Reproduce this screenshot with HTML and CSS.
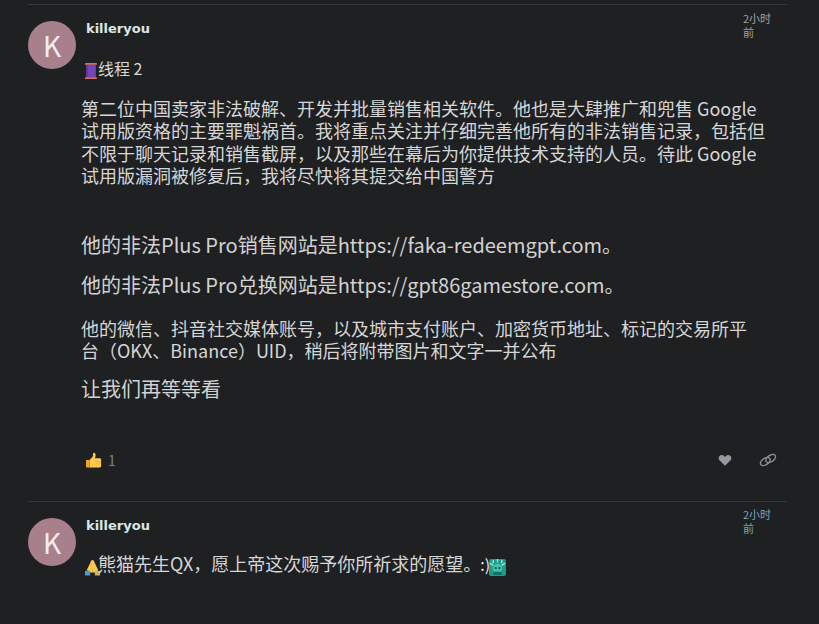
FILE: index.html
```html
<!DOCTYPE html>
<html lang="zh-CN">
<head>
  <meta charset="UTF-8" />
  <meta name="viewport" content="width=device-width, initial-scale=1.0" />
  <title>线程 2</title>
  <link rel="stylesheet" href="styles.css">
</head>
<body>
  <div class="topic">
    <article class="post first">
      <div class="avatar">K</div>
      <div class="post-main">
        <header class="post-head">
          <span class="username">killeryou</span>
          <span class="post-date">2小时前</span>
        </header>
        <div class="cooked">
          <p class="thread-line"><svg class="emoji spool" viewBox="0 0 12 16"><rect x="1.200" y="1.500" width="9.600" height="13" fill="#7445b5"/><rect x="1.200" y="1.500" width="1.500" height="13" fill="#5f359c"/><rect x="0" y="0" width="12" height="1.800" rx="0.500" fill="#d0705f"/><rect x="0" y="14.200" width="12" height="1.800" rx="0.500" fill="#d0705f"/></svg>线程 2</p>
          <p class="para">第二位中国卖家非法破解、开发并批量销售相关软件。他也是大肆推广和兜售 Google 试用版资格的主要罪魁祸首。我将重点关注并仔细完善他所有的非法销售记录，包括但不限于聊天记录和销售截屏，以及那些在幕后为你提供技术支持的人员。待此 Google 试用版漏洞被修复后，我将尽快将其提交给中国警方</p>
          <p class="big first-big">他的非法Plus Pro销售网站是https://faka-redeemgpt.com。</p>
          <p class="big second-big">他的非法Plus Pro兑换网站是https://gpt86gamestore.com。</p>
          <p class="para social">他的微信、抖音社交媒体账号，以及城市支付账户、加密货币地址、标记的交易所平台（OKX、Binance）UID，稍后将附带图片和文字一并公布</p>
          <p class="big wait">让我们再等等看</p>
        </div>
        <footer class="post-actions">
          <div class="reactions">
            <svg class="thumb" viewBox="0 0 16 16"><path d="M1 7.500h3.200v7H1.800c-.5 0-.8-.3-.8-.8z" fill="#f0a830"/><path d="M4.200 7.500 7 4.600c.5-.6.6-1.400.6-2.600 0-.7.4-1.200 1-1.200.9 0 1.400.9 1.400 2.200 0 1-.3 2-.7 2.800h4.600c.8 0 1.300.6 1.300 1.300v5.800c0 1-.7 1.800-1.800 1.800H4.200z" fill="#fdc94f"/><path d="M10 9h5M10 11.200h5" stroke="#eda82f" stroke-width=".7"/></svg>
            <span class="count">1</span>
          </div>
          <div class="controls">
            <svg class="heart" viewBox="0 0 16 16"><path d="M8 14.500 1.900 8.600C.3 7 .4 4.500 2 3.100c1.500-1.300 3.900-1 5.200.5L8 4.500l.8-.9c1.300-1.500 3.700-1.800 5.200-.5 1.600 1.400 1.700 3.900.1 5.500z" fill="#97979f"/></svg>
            <svg class="link" viewBox="0 0 18 18" fill="none" stroke="#8c8c94" stroke-width="1.500"><ellipse cx="6.300" cy="10.500" rx="5.400" ry="3.200" transform="rotate(-35 6.300 10.500)"/><ellipse cx="11.700" cy="7.500" rx="5.400" ry="3.200" transform="rotate(-35 11.700 7.500)"/></svg>
          </div>
        </footer>
      </div>
    </article>
    <article class="post second">
      <div class="avatar">K</div>
      <div class="post-main">
        <header class="post-head">
          <span class="username">killeryou</span>
          <span class="post-date new">2小时前</span>
        </header>
        <div class="cooked">
          <p class="greet"><svg class="emoji pray" viewBox="0 0 16 17"><path d="M8 0.500c-1.200 0-1.900 1.200-2.300 2.800L2 11l2 2.500 3.800.5.200-3 .2 3 3.800-.5 2-2.500-3.700-7.700C9.900 1.700 9.200.5 8 .5z" fill="#f7c948"/><rect x="0" y="12" width="5.500" height="5" fill="#4f97d8"/><rect x="10.500" y="12" width="5.500" height="5" fill="#c9b26a"/></svg>熊猫先生QX，愿上帝这次赐予你所祈求的愿望。<span class="smile">:)</span><svg class="emoji badge" viewBox="0 0 16 16"><rect width="16" height="16" rx="2" fill="#1f9a8f"/><path d="M4 1v3M8 0v3M12 1v3M1 4l3 2M15 4l-3 2" stroke="#a9ece0" stroke-width="1.200"/><circle cx="8" cy="9" r="4.500" fill="#3fc2a8"/><rect x="4" y="12" width="8" height="3" fill="#0f6f6a"/><circle cx="6.300" cy="8.500" r="1" fill="#0f4f4a"/><circle cx="9.700" cy="8.500" r="1" fill="#0f4f4a"/></svg></p>
        </div>
      </div>
    </article>
  </div>
</body>
</html>
```

FILE: styles.css
```css
* { box-sizing: border-box; }
body { margin: 0; height: 624px; overflow: hidden; background: #1f2022; color: #d6d6d6; font-family: "Noto Sans CJK SC", "Noto Sans", sans-serif; }
p { margin: 0; }
.topic { margin-left: 28px; width: 759px; padding-top: 4px; }
.post { display: flex; gap: 10px; border-top: 1px solid #37383b; }
.post.first { height: 497px; padding-top: 16px; }
.post.second { padding-top: 16px; }
.avatar { flex: none; width: 48px; height: 48px; border-radius: 50%; background: #a8808c; color: #f4ecee; font-size: 28px; line-height: 48px; text-align: center; }
.post-main { flex: 1; min-width: 0; }
.post-head { display: flex; justify-content: space-between; height: 35px; }
.second .post-head { height: 33px; }
.username { font-family: "DejaVu Sans", sans-serif; font-weight: 700; font-size: 13px; line-height: 14px; color: #d9e6e6; margin-top: 1px; }
.post-date { width: 32px; margin-right: 12px; font-size: 11px; line-height: 14px; color: #a2a2a6; margin-top: -10px; }
.post-date.new { color: #6ea9c2; margin-top: -11px; }
.cooked { margin-left: -5px; }
.thread-line { font-size: 16px; line-height: 24px; margin-left: 4px; }
.greet { font-size: 18px; line-height: 24px; margin-left: 4px; }
.emoji { height: 16px; vertical-align: -4px; }
.spool { width: 12px; margin-right: 1px; }
.pray { width: 15px; height: 17px; margin-right: -2px; vertical-align: -5px; }
.badge { width: 17px; height: 17px; vertical-align: -5px; }
.smile { font-size: 16px; color: #e8e8e8; margin-left: -1px; margin-right: -1px; }
.para { font-size: 18px; line-height: 22.400px; color: #d6d6d6; max-width: 690px; }
.thread-line + .para { margin-top: 17px; }
.big { font-size: 20px; line-height: 28px; color: #d2d2d2; }
.first-big { margin-top: 44px; }
.second-big { margin-top: 12px; }
.para.social { margin-top: 18px; max-width: 680px; }
.wait { margin-top: 14px; }
.post-actions { display: flex; justify-content: space-between; align-items: center; margin-top: 47px; padding-right: 10px; }
.reactions { display: flex; align-items: center; gap: 6px; margin-left: -1px; }
.thumb { width: 17px; height: 17px; }
.count { font-size: 14px; color: #7d7e8c; }
.controls { display: flex; align-items: center; gap: 27px; }
.heart { width: 14px; height: 14px; }
.link { width: 18px; height: 18px; }
```
